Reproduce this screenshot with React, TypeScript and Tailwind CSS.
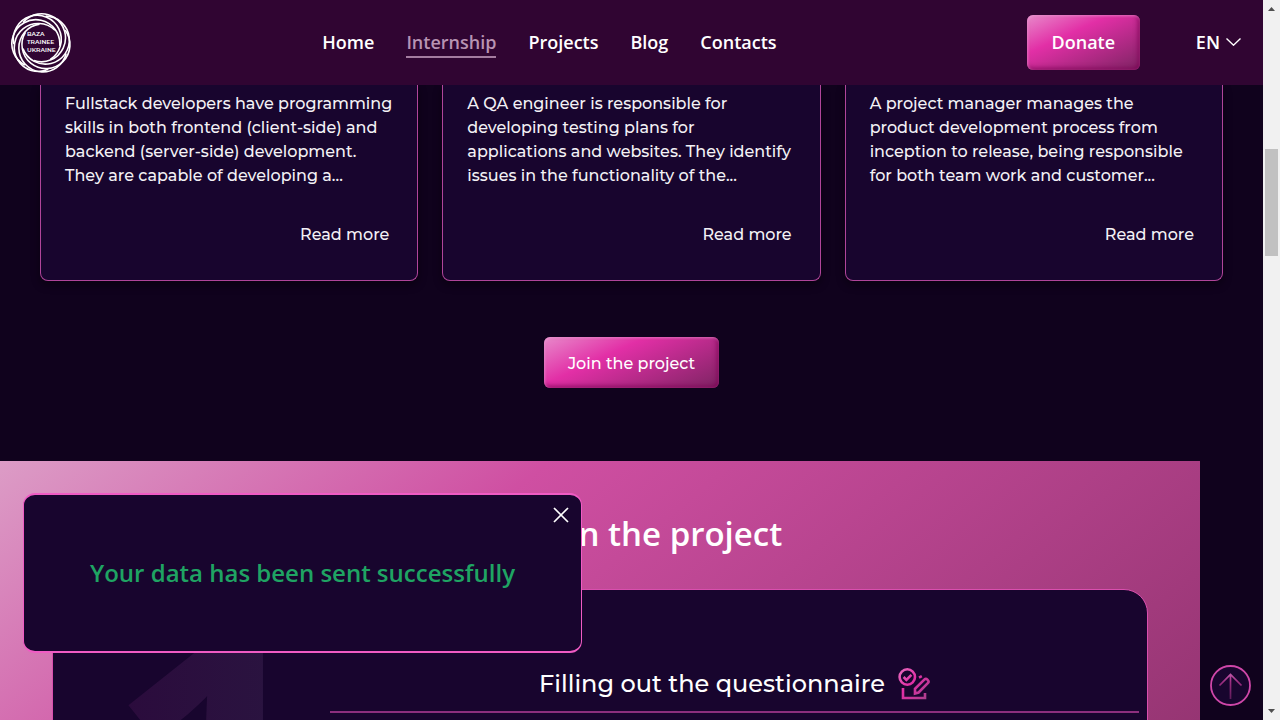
const navItems = ["Home", "Internship", "Projects", "Blog", "Contacts"];

const roles = [
  [
    "Fullstack developers have programming",
    "skills in both frontend (client-side) and",
    "backend (server-side) development.",
    "They are capable of developing a...",
  ],
  [
    "A QA engineer is responsible for",
    "developing testing plans for",
    "applications and websites. They identify",
    "issues in the functionality of the...",
  ],
  [
    "A project manager manages the",
    "product development process from",
    "inception to release, being responsible",
    "for both team work and customer...",
  ],
];

const buttonSkin =
  "rounded-md text-white bg-[linear-gradient(155deg,#e88acb_0%,#e22fa6_36%,#7d2463_100%)] shadow-[inset_1px_1px_3px_rgba(255,190,235,0.5),inset_-2px_-2px_5px_rgba(125,0,85,0.8)]";

const ringAngles = [0, 51, 103, 154, 206, 257, 309];

function Logo() {
  return (
    <svg className="size-[62px]" viewBox="0 0 62 62" role="img" aria-label="Baza Trainee Ukraine">
      <g fill="none" stroke="#fff" strokeWidth="1.6">
        {ringAngles.map((angle) => (
          <path key={angle} d="M24 48.600A24 24 0 1 0 13 10.500" transform={`rotate(${angle} 31 31)`} />
        ))}
      </g>
      <g fill="#fff" className="font-['Montserrat',Inter,sans-serif] text-[6px] font-semibold">
        <text x="17" y="24">BAZA</text>
        <text x="17" y="32">TRAINEE</text>
        <text x="17" y="40">UKRAINE</text>
      </g>
    </svg>
  );
}

function QuestionnaireIcon() {
  return (
    <svg className="size-8" viewBox="0 0 32 32" fill="none" stroke="url(#formStroke)" strokeWidth="2.6" aria-hidden="true">
      <defs>
        <linearGradient id="formStroke" gradientUnits="userSpaceOnUse" x1="2" y1="2" x2="32" y2="30">
          <stop offset="0" stopColor="#e667bc" />
          <stop offset="0.4" stopColor="#e22fa6" />
          <stop offset="1" stopColor="#a5408a" />
        </linearGradient>
      </defs>
      <circle cx="9.3" cy="9" r="7.700" />
      <path d="M5.600 9l2.800 2.800 5-5" />
      <path d="M5 20v10h22v-5" />
      <path d="M17 25.500v-4.600l9.300-9.200a2.200 2.200 0 0 1 3.100 0l.4.4a2.200 2.200 0 0 1 0 3.100L20.600 24.500l-3.600 1z" />
      <path d="M21 9.600l2.800-1.400" />
    </svg>
  );
}

function Header() {
  return (
    <header className="flex h-[85px] shrink-0 items-center justify-between bg-[#300532] pr-[22px] pl-[10px] text-lg font-semibold text-white">
      <a href="#home"><Logo /></a>
      <nav className="flex gap-8">
        {navItems.map((item) => (
          <a
            key={item}
            href={`#${item.toLowerCase()}`}
            className={
              item === "Internship"
                ? "border-b-2 border-[#a47ca0] leading-7 text-[#b893b3]"
                : "border-b-2 border-transparent leading-7"
            }
          >
            {item}
          </a>
        ))}
      </nav>
      <div className="flex items-center gap-14">
        <button type="button" className={`h-[55px] w-[113px] pb-[2px] ${buttonSkin}`}>Donate</button>
        <button type="button" className="flex items-center gap-[6px] pb-[2px]">
          EN
          <svg className="h-2 w-[15px]" viewBox="0 0 15 8" fill="none" stroke="#fff" strokeWidth="1.4" aria-hidden="true">
            <path d="M.5.6l7 6.600 7-6.600" />
          </svg>
        </button>
      </div>
    </header>
  );
}

function RoleCards() {
  return (
    <section className="shrink-0 px-10 text-center">
      <div className="grid grid-cols-3 gap-6 text-left">
        {roles.map((lines) => (
          <article
            key={lines[0]}
            className="flex flex-col rounded-b-lg border border-t-0 border-[#b0459a] bg-[#18052e] pt-[7px] pr-7 pb-[33px] pl-6 font-['Montserrat',Inter,sans-serif] text-base leading-6 font-medium text-[#f3f1f5] shadow-[0_4px_8px_rgba(0,0,0,0.4)]"
          >
            <p className="whitespace-nowrap">
              {lines.map((line) => (
                <span key={line} className="block">{line}</span>
              ))}
            </p>
            <a href="#more" className="mt-[35px] self-end">
              Read more
            </a>
          </article>
        ))}
      </div>
      <button type="button" className={`mt-14 mb-[73px] h-[51px] w-[175px] pt-[2px] font-['Montserrat',Inter,sans-serif] font-medium ${buttonSkin}`}>
        Join the project
      </button>
    </section>
  );
}

function Steps() {
  return (
    <section className="mr-[63px] h-[600px] shrink-0 bg-[linear-gradient(141deg,#dc9cc6_0px,#cf4fa2_346px,#963573_957px)] px-[52px] pt-12">
      <h2 className="text-center text-[33px] leading-[50px] font-semibold text-white">How to join the project</h2>
      <div className="mt-[30px] flex h-[500px] rounded-t-3xl border border-[#d94fae] bg-[#18052e] pr-2">
        <div className="w-[277px] shrink-0 pl-[53px]">
          <span className="block bg-linear-to-r from-[#2b0a3c] to-[#2a1440] to-80% bg-clip-text pt-[5px] text-[380px] leading-[329px] font-bold text-transparent">
            1
          </span>
        </div>
        <div className="min-w-0 flex-1 pt-[74px]">
          <h3 className="flex items-center justify-center gap-[13px] border-b-2 border-[#8d2f7e] pb-[7px] font-['Montserrat',Inter,sans-serif] text-2xl leading-10 font-medium text-white">
            Filling out the questionnaire
            <QuestionnaireIcon />
          </h3>
        </div>
      </div>
    </section>
  );
}

function Toast() {
  return (
    <div role="status" className="absolute bottom-[67px] left-[23px] flex h-[160px] w-[559px] items-center justify-center rounded-xl border-x border-y-2 border-[#f05bc4] bg-[#18052e]">
      <p className="text-2xl font-semibold text-[#1fa463]">Your data has been sent successfully</p>
      <button type="button" aria-label="Close" className="absolute top-3 right-3">
        <svg className="size-4" viewBox="0 0 16 16" stroke="#fff" strokeWidth="1.7" aria-hidden="true">
          <path d="M1 1l14 14M15 1L1 15" />
        </svg>
      </button>
    </div>
  );
}

function ScrollTop() {
  return (
    <button type="button" aria-label="Back to top" className="absolute right-3 bottom-[14px]">
      <svg className="size-[41px]" viewBox="0 0 41 41" fill="none" aria-hidden="true">
        <defs>
          <linearGradient id="arrowStroke" gradientUnits="userSpaceOnUse" x1="20" y1="8" x2="20" y2="35">
            <stop offset="0" stopColor="#c65cae" />
            <stop offset="0.35" stopColor="#9b2c80" />
            <stop offset="1" stopColor="#5a1a57" />
          </linearGradient>
        </defs>
        <circle cx="20.500" cy="20.500" r="19.500" fill="#18052e" stroke="#cf47a9" strokeWidth="1.800" />
        <path d="M20.500 34V9.500M9.500 20.500l11-11 11 11" stroke="url(#arrowStroke)" strokeWidth="1.700" />
      </svg>
    </button>
  );
}

function ScrollBar() {
  return (
    <div className="flex w-[17px] shrink-0 flex-col items-center bg-[#f1f1f1]" aria-hidden="true">
      <svg className="h-[17px] w-full shrink-0" viewBox="0 0 17 17"><path d="M5 11h7L8.500 7z" fill="#505050" /></svg>
      <div className="mt-[132px] h-[107px] w-[13px] bg-[#c1c1c1]" />
      <svg className="mt-auto h-[17px] w-full shrink-0" viewBox="0 0 17 17"><path d="M5 6h7l-3.500 4z" fill="#505050" /></svg>
    </div>
  );
}

export default function App() {
  return (
    <div className="flex h-screen overflow-hidden bg-[#10021d] font-['Open_Sans',sans-serif]">
      <div className="relative flex min-w-0 flex-1 flex-col overflow-hidden">
        <Header />
        <main className="flex min-h-0 flex-1 flex-col overflow-hidden">
          <RoleCards />
          <Steps />
        </main>
        <Toast />
        <ScrollTop />
      </div>
      <ScrollBar />
    </div>
  );
}
